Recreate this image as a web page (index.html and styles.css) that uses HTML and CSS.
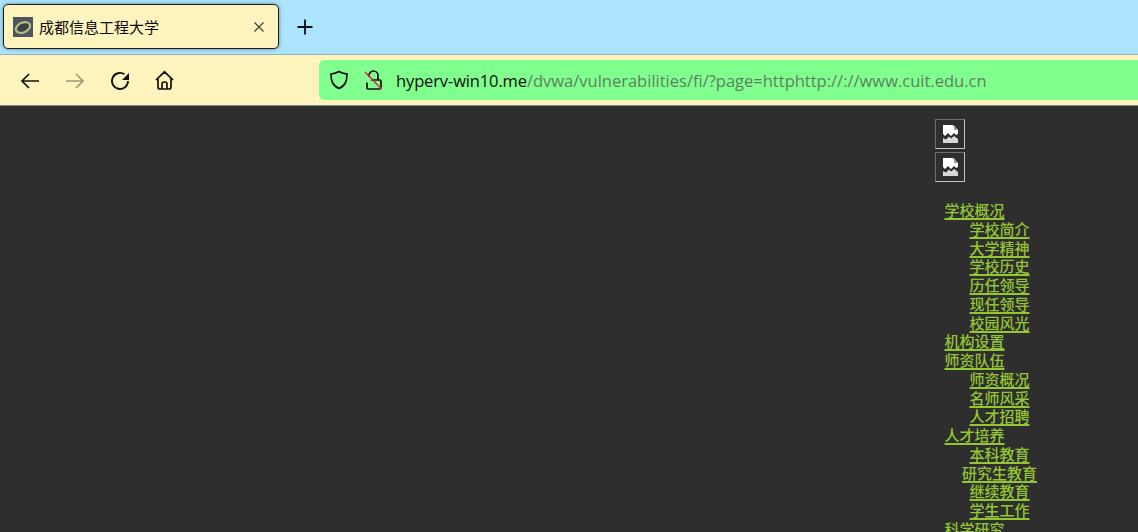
FILE: index.html
```html
<!DOCTYPE html>
<html lang="zh">
<head>
<meta charset="utf-8">
<title>成都信息工程大学</title>
<link rel="stylesheet" href="styles.css">
</head>
<body>
<header class="tabbar">
  <div class="tab">
    <svg class="favicon" width="20" height="20" viewBox="0 0 20 20"><rect width="20" height="20" fill="#50545c"/><ellipse cx="10" cy="10.500" rx="7.500" ry="4.800" transform="rotate(-24 10 10.500)" fill="#3d4045" stroke="#b3bf8c" stroke-width="2.200"/></svg>
    <span class="tab-title">成都信息工程大学</span>
    <svg class="tab-close" width="10" height="10" viewBox="0 0 10 10"><path d="M.5.500l9 9M9.500.500l-9 9" stroke="#3a3a3a" stroke-width="1.100" fill="none"/></svg>
  </div>
  <svg class="new-tab" width="16" height="16" viewBox="0 0 16 16"><path d="M8 .5v15M.5 8h15" stroke="#0c0c0d" stroke-width="1.800" fill="none"/></svg>
</header>
<nav class="toolbar">
  <div class="nav-buttons">
    <svg width="20" height="20" viewBox="0 0 20 20"><path d="M19 11H2M9 4 2 11l7 7" stroke="#111" stroke-width="1.700" fill="none"/></svg>
    <svg class="dim" width="20" height="20" viewBox="0 0 20 20"><path d="M1 11h17M11 4l7 7-7 7" stroke="#111" stroke-width="1.700" fill="none"/></svg>
    <svg width="20" height="20" viewBox="0 0 20 20"><path d="M14.500 4.300A8 8 0 1 0 18 11" stroke="#111" stroke-width="1.900" fill="none"/><path d="M19 3v7h-7z" fill="#111"/></svg>
    <svg width="20" height="20" viewBox="0 0 20 20"><path d="M1 10 9.500 1.800 18 10M3 8v9a2 2 0 0 0 2 2h9a2 2 0 0 0 2-2V8M7 19v-5a2 2 0 0 1 2-2h1a2 2 0 0 1 2 2v5" stroke="#111" stroke-width="1.700" fill="none"/></svg>
  </div>
  <div class="urlbar">
    <svg class="shield" width="20" height="20" viewBox="0 0 20 20"><path d="M10 1.500c2.500 1.700 5 2.300 8 2.500 0 7-1.500 11.500-8 14.500C3.500 15.500 2 11 2 4c3-.2 5.500-.8 8-2.500z" stroke="#111" stroke-width="1.700" fill="none"/></svg>
    <svg class="lock" width="20" height="20" viewBox="0 0 20 20"><path d="M5 7V5.500a4.500 4.500 0 0 1 9 0V10M3 12.500V18a1 1 0 0 0 1 1h11.500a1.500 1.500 0 0 0 1.500-1.500V11.500a1.500 1.500 0 0 0-1.500-1.500H7" stroke="#111" stroke-width="1.700" fill="none"/><path d="M1 2 17.500 19" stroke="#e22850" stroke-width="1.600"/></svg>
    <span class="url"><span class="host">hyperv-win10.me</span>/dvwa/vulnerabilities/fi/?page=httphttp://://www.cuit.edu.cn</span>
  </div>
</nav>
<main class="page">
  <div class="column">
    <div class="broken"><svg width="15" height="18" viewBox="0 0 15 18"><path d="M0 0h10l5 5v4l-2 1-2-2-3 3-3-3-3 3-2-2z" fill="#fff"/><path d="M11 0v5h4z" fill="#999"/><path d="M0 13l3 1.500 3-3 2 2 3-2.500 4 3V18H0z" fill="#d8d8d8"/></svg></div>
    <div class="broken"><svg width="15" height="18" viewBox="0 0 15 18"><path d="M0 0h10l5 5v4l-2 1-2-2-3 3-3-3-3 3-2-2z" fill="#fff"/><path d="M11 0v5h4z" fill="#999"/><path d="M0 13l3 1.500 3-3 2 2 3-2.500 4 3V18H0z" fill="#d8d8d8"/></svg></div>
    <ul class="menu">
      <li><a href="#">学校概况</a>
        <ul class="sub">
          <li><a href="#">学校简介</a></li>
          <li><a href="#">大学精神</a></li>
          <li><a href="#">学校历史</a></li>
          <li><a href="#">历任领导</a></li>
          <li><a href="#">现任领导</a></li>
          <li><a href="#">校园风光</a></li>
        </ul>
      </li>
      <li><a href="#">机构设置</a></li>
      <li><a href="#">师资队伍</a>
        <ul class="sub">
          <li><a href="#">师资概况</a></li>
          <li><a href="#">名师风采</a></li>
          <li><a href="#">人才招聘</a></li>
        </ul>
      </li>
      <li><a href="#">人才培养</a>
        <ul class="sub">
          <li><a href="#">本科教育</a></li>
          <li><a href="#">研究生教育</a></li>
          <li><a href="#">继续教育</a></li>
          <li><a href="#">学生工作</a></li>
        </ul>
      </li>
      <li><a href="#">科学研究</a></li>
    </ul>
  </div>
</main>
</body>
</html>
```
FILE: styles.css
```css
* { box-sizing: border-box; }
html, body { margin: 0; height: 100%; overflow: hidden; }
body { display: flex; flex-direction: column; background: #2e2e2e; font-family: "Noto Sans CJK SC", sans-serif; }
.tabbar { height: 55px; flex: none; background: #ade5ff; border-bottom: 1px solid #8fb0bc; display: flex; align-items: center; padding: 0 0 0 3px; }
.tab { width: 276px; height: 45px; margin-top: -1px; display: flex; align-items: center; background: #fff4bd; border: 1px solid #1c1c1c; border-radius: 5px; box-shadow: 0 0 4px rgba(0,0,0,.4); padding: 0 14px 0 9px; }
.favicon { flex: none; }
.tab-title { margin-left: 6px; flex: 1; font-size: 15px; color: #0c0c0d; }
.tab-close { flex: none; }
.new-tab { margin-left: 18px; flex: none; }
.toolbar { height: 51px; flex: none; background: #fff4bd; border-bottom: 1px solid #7f8a8a; display: flex; align-items: center; }
.nav-buttons { display: flex; gap: 25px; padding-left: 20px; width: 319px; }
.dim { opacity: .4; }
.urlbar { flex: 1; height: 40px; background: #80ff8f; border-radius: 5px 0 0 5px; display: flex; align-items: center; padding-left: 10px; }
.lock { margin-left: 15px; }
.url { margin-left: 12px; font-family: "Open Sans", sans-serif; font-size: 16.500px; color: #5e7f5e; white-space: nowrap; }
.host { color: #0c0c0d; letter-spacing: -.13px; }
.page { flex: 1; padding: 13px 0 0 935px; overflow: hidden; }
.column { width: 200px; }
.broken { width: 30px; height: 30px; margin-bottom: 3px; border: 1px solid #6e6e6e; border-bottom-color: #c4c4c4; border-right-color: #c4c4c4; display: flex; align-items: center; justify-content: center; }
.menu { list-style: none; margin: 19px 0 0; padding: 0 0 0 9.500px; font-size: 15px; line-height: 18.750px; }
.sub { list-style: none; margin: 0; padding: 0; width: 110px; text-align: center; }
.menu a { display: inline-block; vertical-align: top; font-weight: 500; color: #94c632; text-decoration: underline; text-decoration-thickness: 2px; text-underline-offset: 2px; }
```
